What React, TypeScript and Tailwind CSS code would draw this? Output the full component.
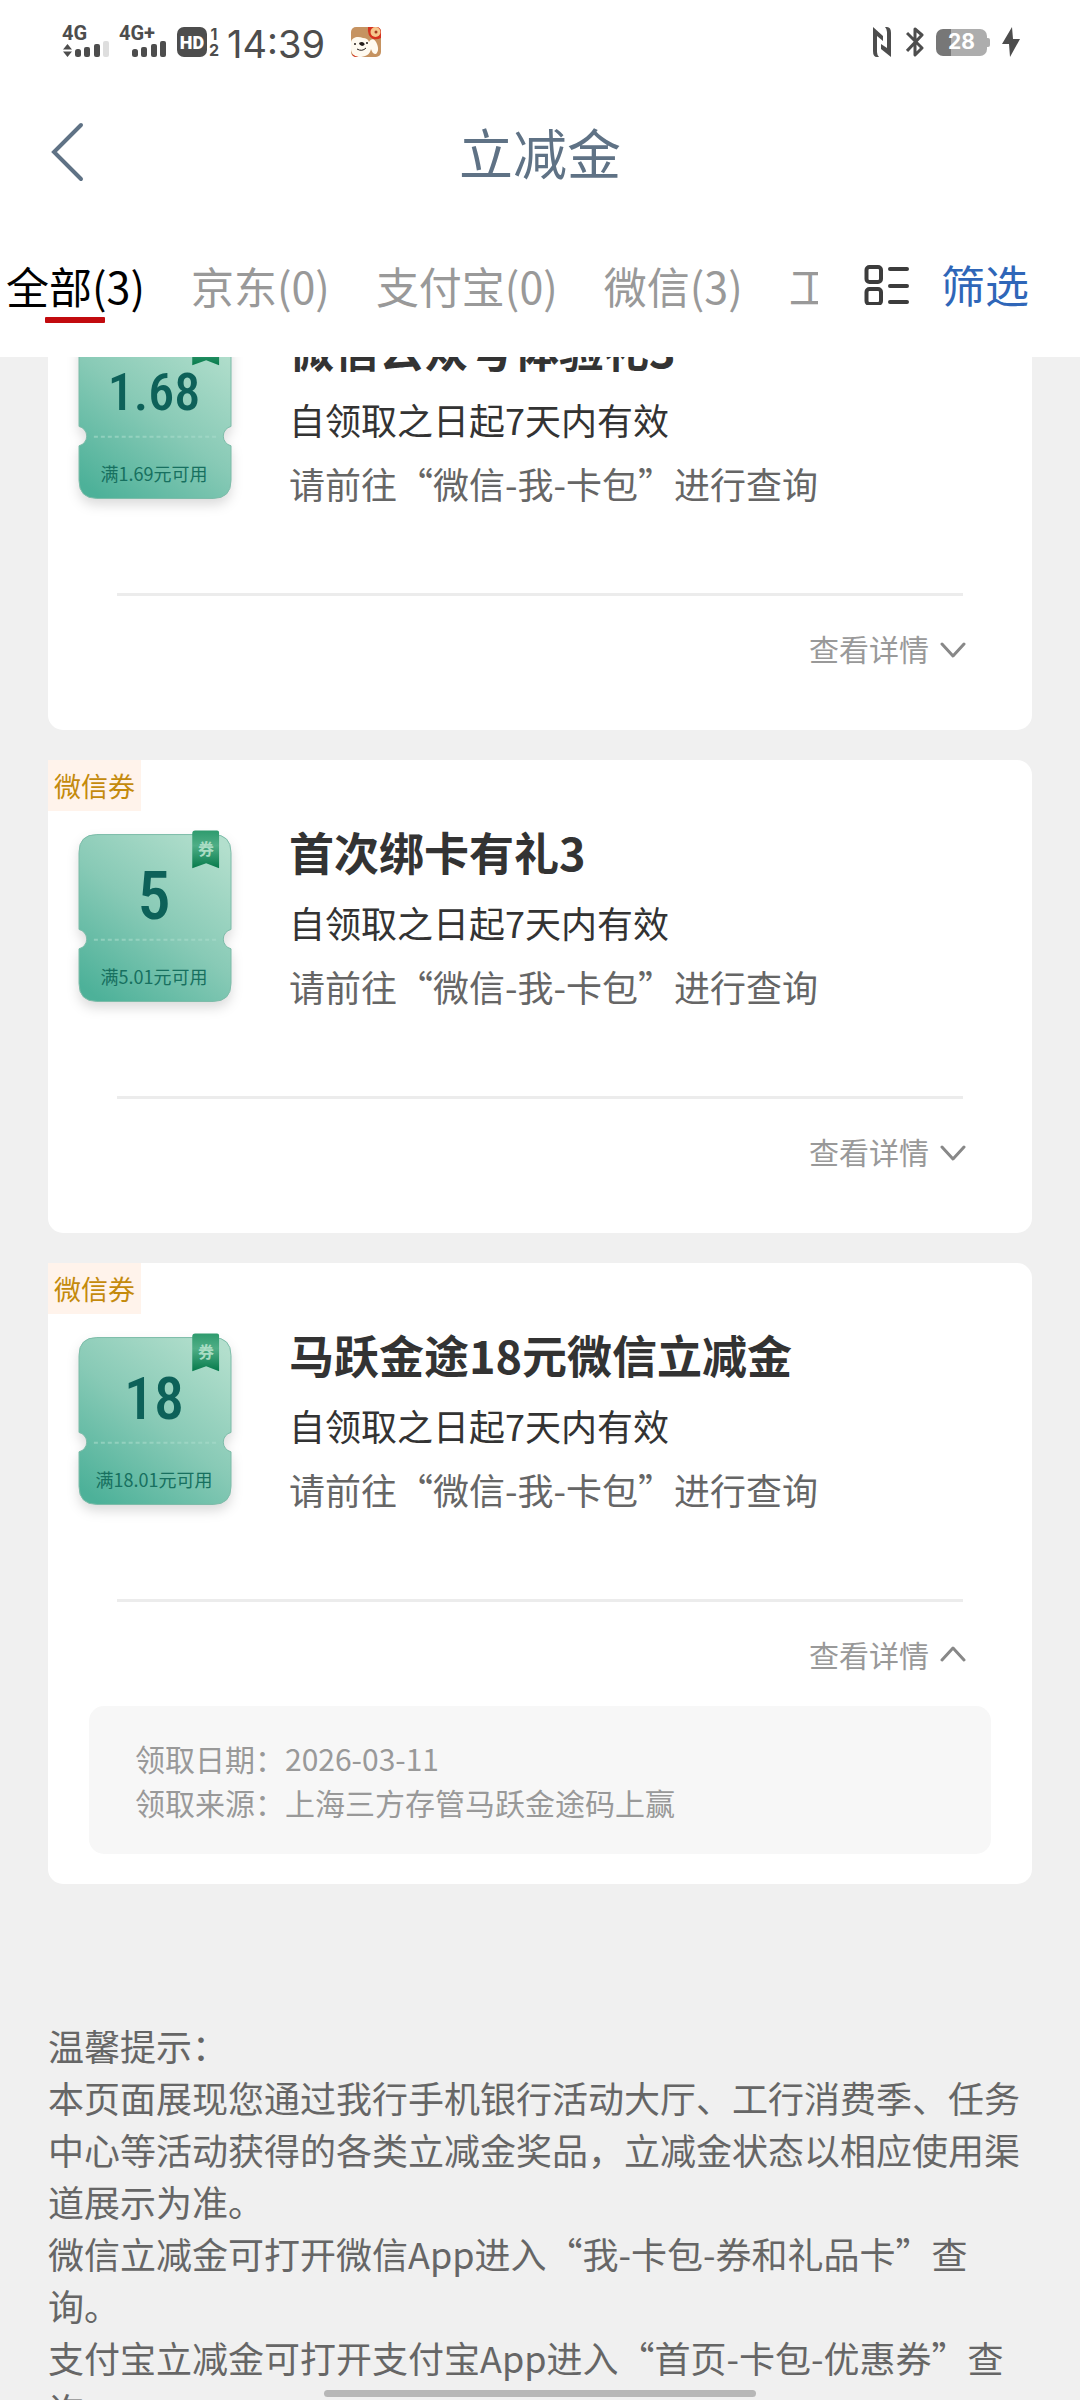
import { useState } from "react";

type Coupon = {
  id: string;
  amount: string;
  amountClass: string;
  threshold: string;
  title: string;
  date: string;
  source: string;
};

const COUPONS: Coupon[] = [
  {
    id: "trial",
    amount: "1.68",
    amountClass: "text-[52px]",
    threshold: "满1.69元可用",
    title: "微信公众号体验礼3",
    date: "2026-03-11",
    source: "微信公众号",
  },
  {
    id: "bind",
    amount: "5",
    amountClass: "text-[66px]",
    threshold: "满5.01元可用",
    title: "首次绑卡有礼3",
    date: "2026-03-11",
    source: "首次绑卡",
  },
  {
    id: "mayue",
    amount: "18",
    amountClass: "text-[60px]",
    threshold: "满18.01元可用",
    title: "马跃金途18元微信立减金",
    date: "2026-03-11",
    source: "上海三方存管马跃金途码上赢",
  },
];

const TABS = ["全部(3)", "京东(0)", "支付宝(0)", "微信(3)", "工行(0)"];

const TIPS = [
  "温馨提示：",
  "本页面展现您通过我行手机银行活动大厅、工行消费季、任务中心等活动获得的各类立减金奖品，立减金状态以相应使用渠道展示为准。",
  "微信立减金可打开微信App进入“我-卡包-券和礼品卡”查询。",
  "支付宝立减金可打开支付宝App进入“首页-卡包-优惠券”查询。",
];

function StatusBar() {
  return (
    <div className="flex h-[84px] items-center justify-between pr-[60px] pl-[62px] font-['Roboto',sans-serif] text-[#4d4d4d]">
      <div className="flex items-center">
        <div className="flex w-[48px] flex-col">
          <span className="text-[20px] leading-[15px] font-bold">4G</span>
          <svg viewBox="0 0 48 17" className="h-[17px] w-[48px]" fill="currentColor">
            <path d="M1 8.500h9L5.500 3zM1 10.500h9L5.500 16z" />
            <rect x="13" y="8" width="6" height="8" rx="2.500" />
            <rect x="22" y="6" width="6" height="10" rx="2" />
            <rect x="32" y="3" width="6" height="13" rx="2" />
            <rect x="41" y="0" width="6" height="16" rx="2" fill="#dedede" />
          </svg>
        </div>
        <div className="ml-[9px] flex w-[48px] flex-col">
          <span className="text-[20px] leading-[15px] font-bold">4G+</span>
          <svg viewBox="0 0 48 17" className="h-[17px] w-[48px]" fill="currentColor">
            <rect x="13" y="8" width="6" height="8" rx="2.500" />
            <rect x="22" y="6" width="6" height="10" rx="2" />
            <rect x="32" y="3" width="6" height="13" rx="2" />
            <rect x="41" y="0" width="6" height="16" rx="2" />
          </svg>
        </div>
        <span className="ml-[10px] flex h-[30px] w-[30px] items-center justify-center rounded-[7px] bg-[#4d4d4d] text-[18px] font-black text-white">
          HD
        </span>
        <span className="ml-[2px] flex flex-col font-['Inter',sans-serif] text-[16px] leading-[16px] font-bold">
          <span className="text-center">1</span>
          <span>2</span>
        </span>
        <span className="ml-[8px] pt-[3px] font-['Inter',sans-serif] text-[38px] leading-[38px]">14:39</span>
        <svg viewBox="0 0 30 30" className="ml-[26px] h-[30px] w-[30px]">
          <rect width="30" height="30" rx="5" fill="#c69361" />
          <path d="M17 0h8q5 0 5 5v6q-4 2-8 1-6-3-5-12z" fill="#d6321f" />
          <circle cx="24.500" cy="5" r="5" fill="#f6c78d" />
          <circle cx="25" cy="5" r="1.500" fill="#a63a20" />
          <path
            d="M0 15c1-5 7-6 12-4 3 0 5 1 6 4 2-4 6-4 8 2 2 5 1 8-1 10-3 0-4-2-5-5-1 6-6 8-12 8-4 0-8-3-8-8z"
            fill="#fffaf0"
          />
          <path d="M8 16q3-2 5 0t-2 3q-3-1-3-3z" fill="#241d1a" />
          <circle cx="4" cy="17" r="1" fill="#241d1a" />
          <circle cx="16" cy="16" r="1" fill="#241d1a" />
          <path d="M6 22q5 3 9-1" fill="none" stroke="#241d1a" strokeWidth="1" />
          <path d="M1 27q5 4 11 3H5q-3 0-4-3z" fill="#d6321f" />
        </svg>
      </div>

      <div className="flex items-center">
        <svg viewBox="0 0 18 30" className="h-[30px] w-[18px]" fill="currentColor">
          <path d="M0 0l10 9v5L4 9v16q0 3 2 5H4q-4 0-4-6z" />
          <path d="M18 30L8 22v-5l6 4V5q0-3-2-5h2q4 0 4 6z" />
        </svg>
        <svg
          viewBox="0 0 18 30"
          className="ml-[15px] h-[30px] w-[18px]"
          fill="none"
          stroke="currentColor"
          strokeWidth="3"
          strokeLinejoin="round"
        >
          <path d="M1 6l15 15-7 7V2l7 6L1 24" />
        </svg>
        <div className="ml-[12px] flex h-[27px] w-[51px] items-center justify-center rounded-[7px] bg-linear-to-r from-[#777] from-29% to-[#adadad] to-29% font-['Inter',sans-serif] text-[21px] font-bold text-white">
          28
        </div>
        <span className="h-[9px] w-[3px] rounded-r-[2px] bg-[#adadad]" />
        <svg viewBox="0 0 18 30" className="ml-[12px] h-[30px] w-[18px]" fill="currentColor">
          <path d="M10 0L0 17h7L8 30 18 12h-7z" />
        </svg>
      </div>
    </div>
  );
}

function Ticket({ coupon }: { coupon: Coupon }) {
  return (
    <div className="relative mt-[14px] h-[168px] w-[152px] shrink-0">
      <svg viewBox="0 0 153 168" className="absolute inset-0 h-full w-full overflow-visible">
        <defs>
          <linearGradient id={`body-${coupon.id}`} x1="0.850" y1="0" x2="0.150" y2="1">
            <stop offset="0" stopColor="#b3dfcd" />
            <stop offset="0.500" stopColor="#88cab6" />
            <stop offset="1" stopColor="#4db199" />
          </linearGradient>
          <linearGradient id={`ribbon-${coupon.id}`} x1="0" y1="0" x2="0" y2="1">
            <stop offset="0" stopColor="#2f9b6e" />
            <stop offset="0.400" stopColor="#4fae86" />
            <stop offset="1" stopColor="#067a4b" />
          </linearGradient>
        </defs>
        <path
          d="M18 0H135Q153 0 153 18V95.500A10 10 0 0 0 153 115V150Q153 168 135 168H18Q0 168 0 150V115A10 10 0 0 0 0 95.500V18Q0 0 18 0Z"
          fill={`url(#body-${coupon.id})`}
          stroke="#7cbba8"
          className="drop-shadow-[0_6px_6px_rgba(0,0,0,0.14)]"
        />
        <path d="M15 106H140" stroke="#a9dccb" strokeWidth="2" strokeDasharray="4 3" opacity="0.600" />
        <path
          d="M117-4H139Q141-4 141-2V34L128 29 114 34V-1Q114-4 117-4Z"
          fill={`url(#ribbon-${coupon.id})`}
        />
      </svg>
      <span className="absolute top-[2px] right-[17px] text-[16px] leading-[24px] font-bold text-[#a9dcc3]">券</span>
      <div className="relative flex h-full flex-col items-center pr-[2px]">
        <span
          className={`flex h-[124px] items-center font-['Roboto_Condensed','Roboto',sans-serif] font-medium text-[#0d6159] ${coupon.amountClass}`}
        >
          {coupon.amount}
        </span>
        <span className="mt-[4px] text-[18px] leading-[28px] whitespace-nowrap text-[#17705f]">{coupon.threshold}</span>
      </div>
    </div>
  );
}

function CouponCard({ coupon, defaultOpen }: { coupon: Coupon; defaultOpen: boolean }) {
  const [open, setOpen] = useState(defaultOpen);

  return (
    <article className="rounded-[15px] bg-white pb-[30px]">
      <span className="flex h-[51px] w-fit items-center bg-[#fff3eb] px-[6px] pt-[2px] text-[27px] text-[#c48a0c]">
        微信券
      </span>
      <div className="mt-[9px] flex gap-[58px] pl-[31px]">
        <Ticket coupon={coupon} />
        <div>
          <h2 className="mb-[6px] text-[45px] leading-[64px] font-bold text-[#333]">{coupon.title}</h2>
          <p className="text-[36px] leading-[64px] text-[#333]">自领取之日起7天内有效</p>
          <p className="text-[36px] leading-[64px] text-[#666]">请前往“微信-我-卡包”进行查询</p>
        </div>
      </div>
      <hr className="mx-[69px] mt-[78px] border-t-[3px] border-[#ececec]" />
      <div className="flex justify-end pr-[66px]">
        <button
          type="button"
          aria-expanded={open}
          onClick={() => setOpen(!open)}
          className="flex h-[104px] items-center gap-[11px] text-[30px] text-[#999]"
        >
          查看详情
          <svg
            viewBox="0 0 26 20"
            className="h-[20px] w-[26px]"
            fill="none"
            stroke="#888"
            strokeWidth="3"
            strokeLinecap="round"
            strokeLinejoin="round"
          >
            <path d={open ? "M2 16L13 4l11 12" : "M2 6l11 12L24 6"} />
          </svg>
        </button>
      </div>
      {open ? (
        <div className="mx-[41px] rounded-[15px] bg-[#f7f7f7] px-[46px] py-[30px] text-[30px] leading-[44px] text-[#999]">
          <p>领取日期：{coupon.date}</p>
          <p>领取来源：{coupon.source}</p>
        </div>
      ) : null}
    </article>
  );
}

export default function App() {
  const [tab, setTab] = useState(0);

  return (
    <div
      lang="zh-CN"
      className="relative flex h-screen flex-col overflow-hidden bg-[#f0f0f0] font-['Noto_Sans_CJK_SC',sans-serif]"
    >
      <header className="z-10 shrink-0 bg-white">
        <StatusBar />
        <div className="grid h-[136px] grid-cols-[1fr_auto_1fr] items-center px-[50px]">
          <button type="button" aria-label="返回" className="w-fit">
            <svg
              viewBox="0 0 36 60"
              className="h-[60px] w-[36px]"
              fill="none"
              stroke="#5f7285"
              strokeWidth="4"
              strokeLinecap="round"
            >
              <path d="M31 3L4 30l27 27" />
            </svg>
          </button>
          <h1 className="text-[54px] leading-[80px] text-[#5f7285]">立减金</h1>
        </div>
        <div className="flex items-start justify-between pr-[51px] pb-[7px]">
          <nav className="flex w-[818px] gap-[46px] overflow-hidden pl-[6px]">
            {TABS.map((label, i) => (
              <button
                key={label}
                type="button"
                onClick={() => setTab(i)}
                className={`relative h-[130px] shrink-0 text-[43px] whitespace-nowrap ${
                  i === tab ? "text-black" : "text-[#999]"
                }`}
              >
                {label}
                {i === tab ? (
                  <span className="absolute bottom-[27px] left-1/2 h-[6px] w-[60px] -translate-x-1/2 rounded-[1px] bg-[#c20b0f]" />
                ) : null}
              </button>
            ))}
          </nav>
          <button type="button" className="flex h-[128px] items-center gap-[31px] text-[44px] text-[#2f66b8]">
            <svg viewBox="0 0 46 42" className="h-[42px] w-[46px]" fill="none" stroke="#3c3c3c" strokeWidth="4">
              <rect x="2.500" y="4" width="14.500" height="15" rx="3" />
              <rect x="2.500" y="26" width="14.500" height="15" rx="3" />
              <path d="M26 6h17M26 23h17M26 39h17" strokeLinecap="round" />
            </svg>
            筛选
          </button>
        </div>
      </header>

      <main className="min-h-0 flex-1 overflow-hidden px-[48px]">
        <div className="-mt-[100px] flex flex-col gap-[30px]">
          {COUPONS.map((c, i) => (
            <CouponCard key={c.id} coupon={c} defaultOpen={i === 2} />
          ))}
        </div>
        <section className="mt-[135px] text-[36px] leading-[52px] text-[#666]">
          {TIPS.map((tip) => (
            <p key={tip}>{tip}</p>
          ))}
        </section>
      </main>

      <div className="absolute bottom-[3px] left-1/2 h-[7px] w-2/5 -translate-x-1/2 rounded-full bg-[#b7b7b7]" />
    </div>
  );
}
